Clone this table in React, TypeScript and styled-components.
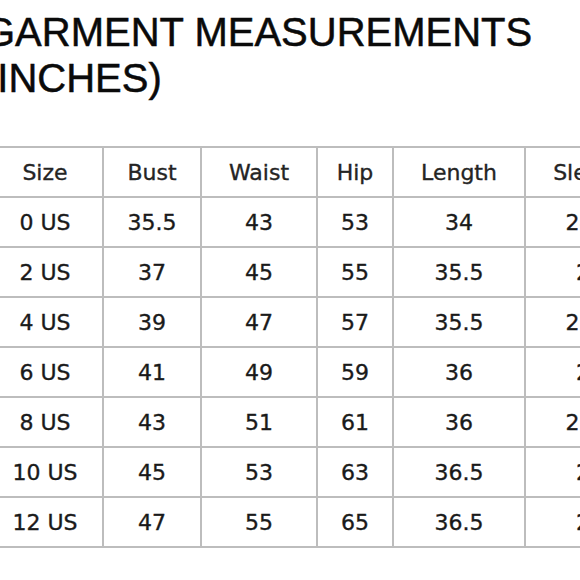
import React, { FC } from 'react';
import styled, { createGlobalStyle } from 'styled-components';

const GlobalStyle = createGlobalStyle`
  html, body {
    margin: 0;
    padding: 0;
    background: #ffffff;
    overflow: hidden;
  }
`;

const Page = styled.div`
  width: 580px;
  height: 580px;
  overflow: hidden;
  padding-top: 9px;
  box-sizing: border-box;
  display: flex;
  flex-direction: column;
  gap: 45px;
`;

const Title = styled.h1`
  margin: 0 0 0 -16px;
  font-family: 'Liberation Sans', Arial, sans-serif;
  font-weight: 400;
  font-size: 40px;
  line-height: 46px;
  color: #0a0a0a;
  -webkit-text-stroke: 0.5px #0a0a0a;
  white-space: nowrap;
`;

const TitleLine = styled.span`
  display: block;
`;

const Grid = styled.div`
  margin-left: -14px;
  width: max-content;
  display: grid;
  grid-template-columns: 114px 96px 114px 74px 130px 128px;
  grid-auto-rows: 48px;
  gap: 2px;
  padding: 2px;
  background: #bdbdbd;
`;

const Cell = styled.div<{ $head?: boolean }>`
  background: #ffffff;
  display: flex;
  align-items: center;
  justify-content: center;
  font-family: 'DejaVu Sans', sans-serif;
  font-size: 22px;
  color: ${(p) => (p.$head ? '#242424' : '#1a1a1a')};
  -webkit-text-stroke: 0.35px currentColor;
  white-space: nowrap;
`;

const headers = ['Size', 'Bust', 'Waist', 'Hip', 'Length', 'Sleeve'];

const rows = [
  ['0 US', '35.5', '43', '53', '34', '24.5'],
  ['2 US', '37', '45', '55', '35.5', '25'],
  ['4 US', '39', '47', '57', '35.5', '25.5'],
  ['6 US', '41', '49', '59', '36', '26'],
  ['8 US', '43', '51', '61', '36', '26.5'],
  ['10 US', '45', '53', '63', '36.5', '27'],
  ['12 US', '47', '55', '65', '36.5', '27'],
];

const SizeTable: FC = () => (
  <Grid>
    {headers.map((h) => (
      <Cell key={h} $head>
        {h}
      </Cell>
    ))}
    {rows.map((row) =>
      row.map((value, i) => <Cell key={row[0] + i}>{value}</Cell>)
    )}
  </Grid>
);

const App: FC = () => {
  return (
    <>
      <GlobalStyle />
      <Page>
        <Title>
          <TitleLine>GARMENT MEASUREMENTS</TitleLine>
          <TitleLine>(INCHES)</TitleLine>
        </Title>
        <SizeTable />
      </Page>
    </>
  );
};

export default App;
